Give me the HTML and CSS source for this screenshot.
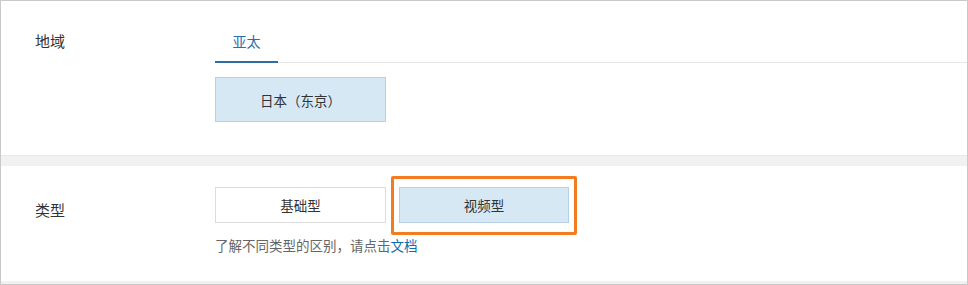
FILE: index.html
```html
<!DOCTYPE html>
<html lang="zh-CN">

<head>
  <meta charset="UTF-8">
  <meta name="viewport" content="width=device-width, initial-scale=1.0">
  <title>实例配置</title>
  <link rel="stylesheet" href="styles.css">
</head>

<body>

  <div class="panel">

    <!-- 地域 -->
    <div class="section region">
      <div class="label">地域</div>
      <div class="field">
        <div class="tabs">
          <div class="tab active">亚太</div>
        </div>
        <button type="button" class="option selected wide">日本（东京）</button>
      </div>
    </div>

    <div class="divider"></div>

    <!-- 类型 -->
    <div class="section type">
      <div class="label">类型</div>
      <div class="field">
        <div class="options">
          <button type="button" class="option">基础型</button>
          <button type="button" class="option selected">视频型</button>
          <div class="highlight"></div>
        </div>
        <p class="hint">了解不同类型的区别，请点击<a href="#">文档</a></p>
      </div>
    </div>

    <div class="footer-band"></div>

  </div>

</body>

</html>
```

FILE: styles.css
```css
body {
  margin: 0;
  padding: 0;
  background-color: white;
  font-family: "Noto Sans CJK SC", "Noto Sans", sans-serif;
  color: #333;
}

.panel {
  width: 966px;
  height: 283px;
  border: 1px solid #c9c9c9;
  border-bottom-width: 2px;
  box-sizing: content-box;
  display: flex;
  flex-direction: column;
}

.section {
  display: grid;
  grid-template-columns: 214px 1fr;
}

.label {
  padding-left: 34px;
  font-size: 15px;
  line-height: 20px;
  color: #333;
}

.region {
  padding-top: 21px;
  height: 133px;
}

.region .label {
  padding-top: 9px;
}

.tabs {
  display: flex;
  border-bottom: 1px solid #e6e6e6;
}

.tab {
  width: 63px;
  height: 39px;
  line-height: 39px;
  text-align: center;
  font-size: 14px;
  color: #2a6fad;
  margin-bottom: -1px;
}

.tab.active {
  border-bottom: 2px solid #2b6da6;
}

.option {
  width: 171px;
  height: 36px;
  background-color: white;
  border: 1px solid #dcdcdc;
  font-family: inherit;
  font-size: 13.5px;
  color: #333;
  padding: 0;
  cursor: pointer;
}

.option.selected {
  background-color: #d7e8f5;
  border-color: #b7d0e4;
}

.option.wide {
  height: 45px;
  margin-top: 14px;
}

.divider {
  height: 10px;
  background-color: #f0f1f3;
  border-top: 1px solid #e9eaed;
}

.type {
  padding-top: 21px;
  flex: 1;
}

.type .label {
  padding-top: 13px;
}

.options {
  position: relative;
  display: flex;
  gap: 13px;
}

.options .option:last-of-type {
  width: 170px;
}

.highlight {
  position: absolute;
  left: 176px;
  top: -11px;
  width: 180px;
  height: 53px;
  border: 3px solid #f47b20;
  border-radius: 2px;
}

.hint {
  margin: 12px 0 0;
  font-size: 13.5px;
  line-height: 20px;
  color: #666;
}

.hint a {
  color: #0b6cb4;
  text-decoration: none;
}

.footer-band {
  height: 3px;
  background-color: #f0f1f3;
}
```
